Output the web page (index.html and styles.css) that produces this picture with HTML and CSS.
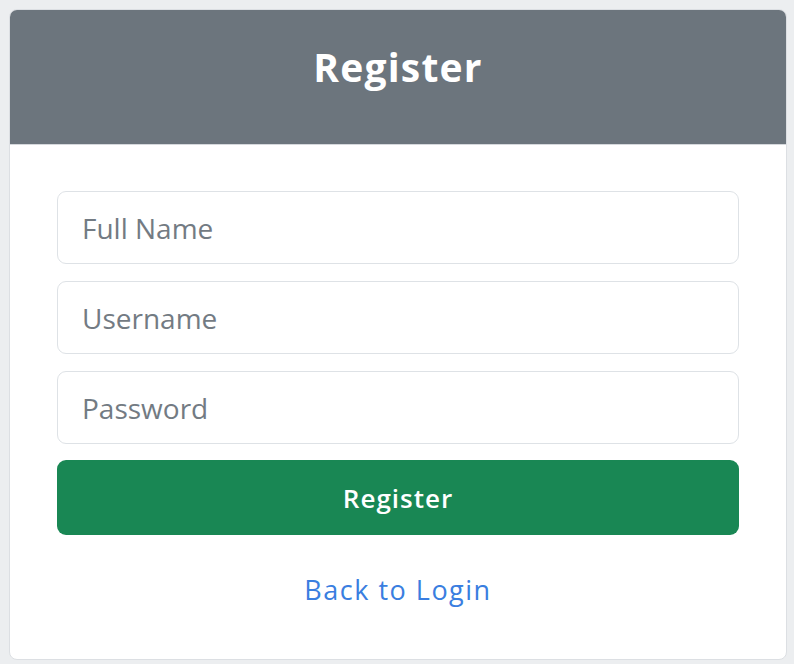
FILE: index.html
```html
<!DOCTYPE html>
<html lang="en">
<head>
  <meta charset="UTF-8"/>
  <meta name="viewport" content="width=device-width, initial-scale=1.0"/>
  <title>Register</title>
  <link rel="stylesheet" href="styles.css">
</head>
<body>
  <div class="card">
    <div class="card-header">
      <h2>Register</h2>
    </div>
    <div class="card-body">
      <form class="register-form">
        <input type="text" class="form-control" placeholder="Full Name"/>
        <input type="text" class="form-control" placeholder="Username"/>
        <input type="password" class="form-control" placeholder="Password"/>
        <button type="submit" class="btn-register">Register</button>
      </form>
      <div class="back-link">
        <a href="#">Back to Login</a>
      </div>
    </div>
  </div>
</body>
</html>
```

FILE: styles.css
```css
* { box-sizing: border-box; margin: 0; padding: 0; }

html, body {
  height: 100%;
}

body {
  font-family: 'Open Sans', sans-serif;
  background: #eceef0;
  padding: 9px 7px 4px 9px;
}

.card {
  height: 651px;
  background: #fff;
  border: 1px solid #dcdfe3;
  border-radius: 8px;
  overflow: hidden;
  display: flex;
  flex-direction: column;
}

.card-header {
  background: #6c757d;
  height: 135px;
  padding-bottom: 22px;
  display: flex;
  align-items: center;
  justify-content: center;
  border-bottom: 1px solid #d5d8dc;
}

.card-header h2 {
  color: #fff;
  font-size: 39px;
  font-weight: 700;
  letter-spacing: 1.2px;
}

.card-body {
  padding: 46px 47px 0 47px;
}

.register-form {
  display: flex;
  flex-direction: column;
  gap: 17px;
}

.form-control {
  height: 73px;
  padding: 0 24px;
  border: 1px solid #dee2e6;
  border-radius: 9px;
  font-family: inherit;
  font-size: 28px;
  color: #212529;
}

.form-control::placeholder {
  color: #737b83;
}

.btn-register {
  height: 75px;
  margin-top: -1px;
  background: #198754;
  border: none;
  border-radius: 9px;
  color: #fff;
  font-family: inherit;
  font-size: 26px;
  font-weight: 600;
  letter-spacing: 1px;
  cursor: pointer;
}

.back-link {
  text-align: center;
  margin-top: 36px;
}

.back-link a {
  color: #3a7ee0;
  font-size: 27px;
  letter-spacing: 1.5px;
  text-decoration: none;
}
```
